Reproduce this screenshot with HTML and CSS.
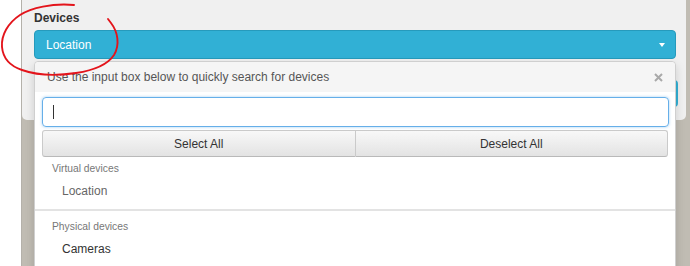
FILE: index.html
```html
<!DOCTYPE html>
<html>
  <head>
    <meta charset="utf-8" />
    <title>Devices</title>
    <link rel="stylesheet" href="styles.css">
  </head>
  <body>
    <div class="backdrop">
      <div class="panel">
        <div class="field-label">Devices</div>
        <div class="select-wrap">
          <div class="select-btn">
            <span>Location</span>
            <span class="caret"></span>
          </div>

          <div class="menu">
            <div class="menu-head">
              <span>Use the input box below to quickly search for devices</span>
              <svg class="close" width="9" height="9" viewBox="0 0 9 9">
                <path d="M1 1 L8 8 M8 1 L1 8" stroke="#a9a9a9" stroke-width="2" />
              </svg>
            </div>
            <div class="menu-body">
              <div class="search"><span class="text-cursor"></span></div>
              <div class="button-group">
                <div class="btn">Select All</div>
                <div class="btn">Deselect All</div>
              </div>
            </div>
            <div class="list">
              <div class="list-header">Virtual devices</div>
              <div class="list-item muted">Location</div>
              <div class="divider"></div>
              <div class="list-header">Physical devices</div>
              <div class="list-item">Cameras</div>
            </div>
          </div>
        </div>
        <div class="action-row">
          <div class="action-btn"></div>
        </div>
      </div>
    </div>

    <!-- hand drawn marker round the field -->
    <svg class="marker" width="130" height="85" viewBox="0 0 130 85">
      <path d="M74 5 C52 3, 31 8, 20 15 C8 23, 1 35, 2 47 C3 58, 10 66, 22 70 C36 75, 56 76, 76 73 C96 70, 108 64, 114 55 C120 45, 118 32, 111 23 L108 19"
        fill="none" stroke="#e3141b" stroke-width="1.9" stroke-linecap="round" />
    </svg>
  </body>
</html>
```

FILE: styles.css
```css
body {
  margin: 0;
  background: #fff;
  font-family: "Liberation Sans", Arial, sans-serif;
  color: #333;
  position: relative;
  overflow: hidden;
}
.backdrop {
  margin-left: 21px;
  border-left: 1px solid #b4b1aa;
  background: #c0bcb3;
  height: 266px;
  overflow: hidden;
}
.panel {
  width: 664px;
  box-sizing: border-box;
  background: #f0f0f0;
  border-radius: 0 0 5px 5px;
  padding: 10px 10px 13px 12px;
}
.field-label {
  font-size: 12px;
  font-weight: bold;
  line-height: 16px;
}
.select-wrap {
  position: relative;
  margin-top: 4px;
}
.select-btn {
  height: 29px;
  box-sizing: border-box;
  display: flex;
  align-items: center;
  justify-content: space-between;
  padding: 0 10px 0 11px;
  background: #31b0d5;
  border: 1px solid #269abc;
  border-radius: 4px;
  color: #fff;
  font-size: 12px;
  line-height: 16px;
}
.caret {
  width: 0;
  height: 0;
  margin-top: 1px;
  border-top: 4px solid #fff;
  border-left: 3px solid transparent;
  border-right: 3px solid transparent;
}
.menu {
  position: absolute;
  top: 31px;
  left: 0;
  right: 0;
  height: 260px;
  background: #fff;
  border: 1px solid #cfcfcf;
  border-radius: 4px;
  box-shadow: 0 4px 10px rgba(0, 0, 0, 0.15);
  z-index: 2;
}
.menu-head {
  height: 30px;
  display: flex;
  align-items: center;
  justify-content: space-between;
  padding: 0 12px;
  background: #f5f5f5;
  border-radius: 4px 4px 0 0;
  font-size: 12px;
  line-height: 16px;
  color: #555;
}
.close {
  display: block;
}
.menu-body {
  padding: 5px 0 0 7px;
}
.search {
  width: 627px;
  height: 30px;
  box-sizing: border-box;
  border: 1px solid #66afe9;
  border-radius: 4px;
  box-shadow: 0 0 3px rgba(102, 175, 233, 0.6);
  display: flex;
  align-items: center;
  padding-left: 10px;
}
.text-cursor {
  width: 1px;
  height: 14px;
  background: #333;
}
.button-group {
  display: flex;
  width: 626px;
  margin-top: 3px;
}
.btn {
  flex: 1;
  height: 27px;
  box-sizing: border-box;
  display: flex;
  align-items: center;
  justify-content: center;
  border: 1px solid #cacaca;
  border-bottom-color: #b9b9b9;
  background: linear-gradient(to bottom, #f8f8f8, #e3e3e3);
  font-size: 12px;
  line-height: 16px;
  color: #333;
}
.btn:first-child {
  border-radius: 3px 0 0 3px;
}
.btn + .btn {
  border-left: none;
  border-radius: 0 3px 3px 0;
}
.list {
  padding-top: 5px;
}
.list-header {
  padding: 0 17px;
  font-size: 10.3px;
  line-height: 14px;
  color: #777;
}
.list-item {
  padding: 6px 27px 4px;
  font-size: 12px;
  line-height: 18px;
  color: #333;
}
.list-item.muted {
  color: #666;
}
.divider {
  height: 2px;
  background: #e3e3e3;
  margin: 5px 0 9px;
}
.action-row {
  display: flex;
  justify-content: flex-end;
  margin-top: 21px;
  margin-right: -2px;
}
.action-btn {
  width: 90px;
  height: 27px;
  background: #31b0d5;
  border-radius: 4px;
}
.marker {
  position: absolute;
  top: 0;
  left: 0;
  pointer-events: none;
  z-index: 5;
}
```
